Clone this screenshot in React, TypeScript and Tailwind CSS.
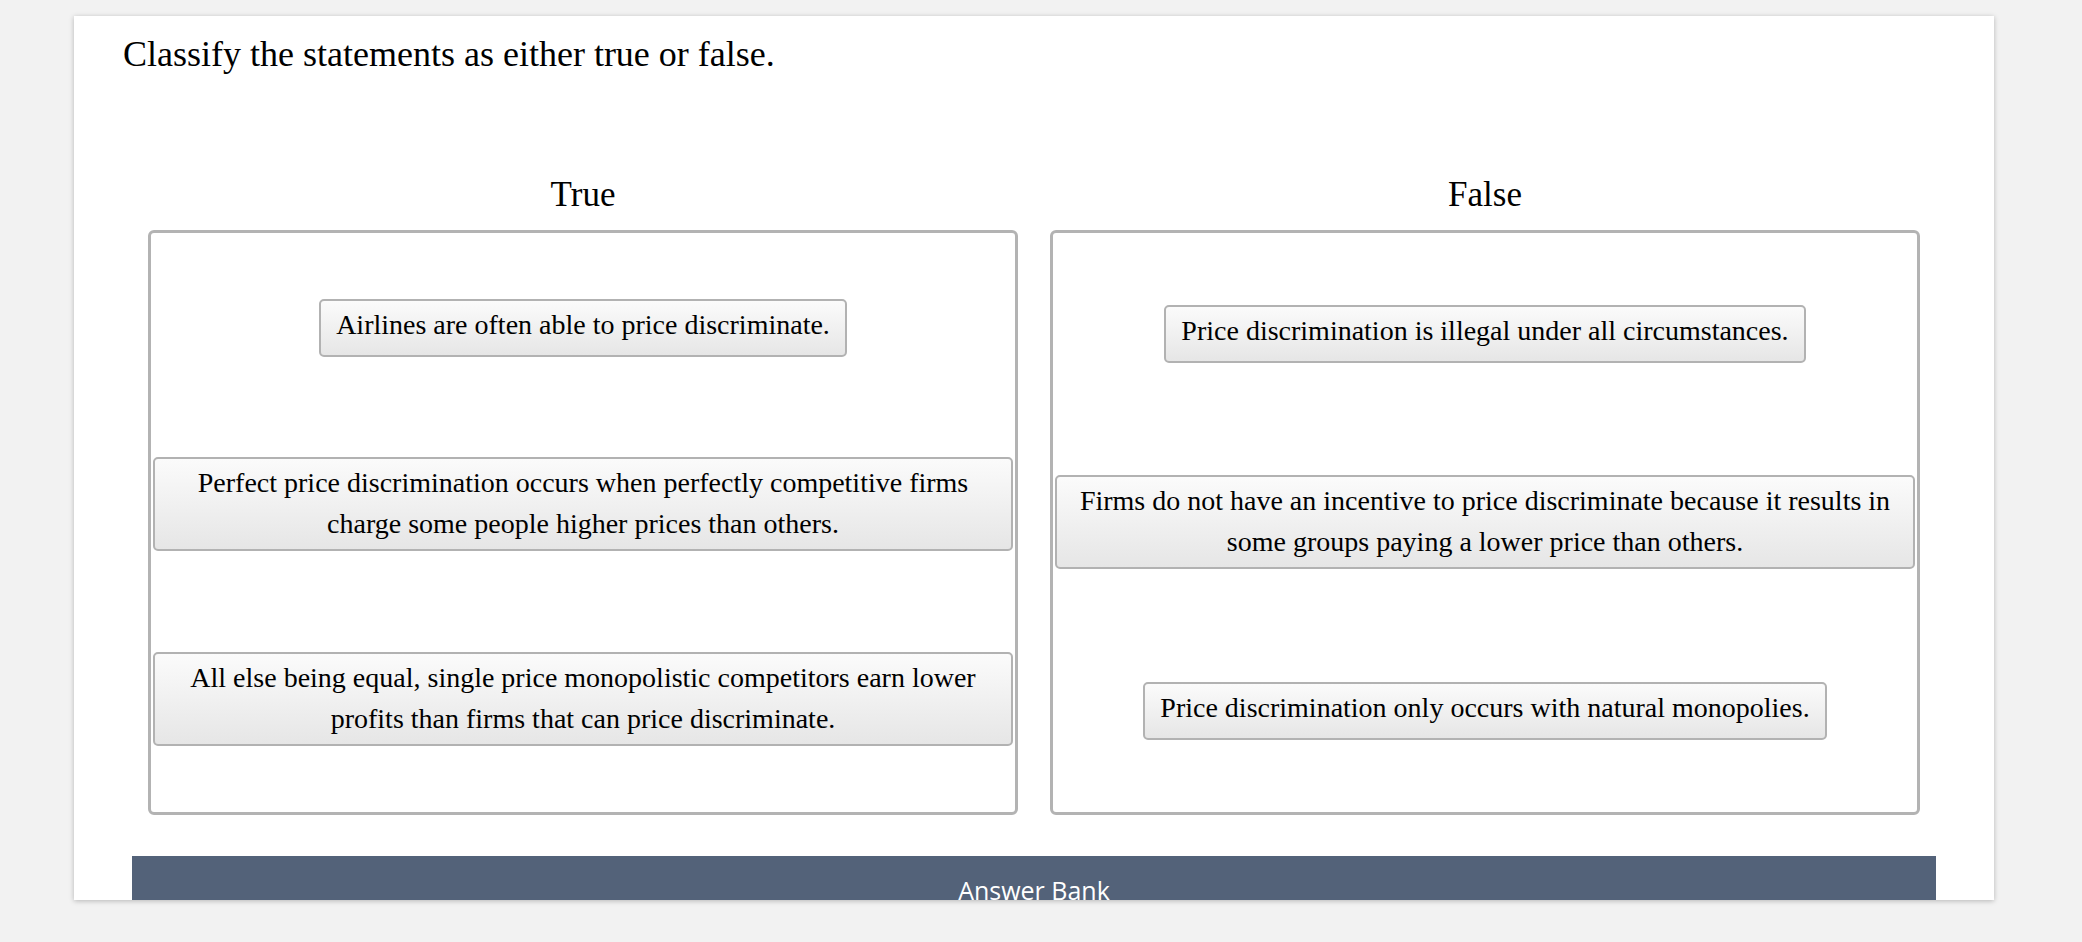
const trueItems = [
  'Airlines are often able to price discriminate.',
  'Perfect price discrimination occurs when perfectly competitive firms charge some people higher prices than others.',
  'All else being equal, single price monopolistic competitors earn lower profits than firms that can price discriminate.',
]

const falseItems = [
  'Price discrimination is illegal under all circumstances.',
  'Firms do not have an incentive to price discriminate because it results in some groups paying a lower price than others.',
  'Price discrimination only occurs with natural monopolies.',
]

function Chip({ text }: { text: string }) {
  return (
    <div className="max-w-full min-h-[58px] rounded-[5px] border-2 border-[#b2b2b2] bg-gradient-to-b from-[#fbfbfb] to-[#e6e6e6] px-[15px] pt-[3px] pb-[5px] text-center text-[28px] leading-[41px] text-black">
      {text}
    </div>
  )
}

function Column({ title, items }: { title: string; items: string[] }) {
  return (
    <div className="flex flex-col">
      <h2 className="text-center text-[35px] leading-[39px] text-black">{title}</h2>
      {/* drop zone */}
      <div className="mt-[16px] h-[585px] rounded-[6px] border-[3px] border-[#b3b3b3] bg-white px-[2px] py-4 flex flex-col items-center justify-around">
        {items.map((t) => (
          <Chip key={t} text={t} />
        ))}
      </div>
    </div>
  )
}

export default function App() {
  return (
    <div className="min-h-[942px] w-full bg-[#f2f2f2] pt-[16px] font-['Liberation_Serif',_'Times_New_Roman',_serif]">
      <div className="ml-[74px] w-[1920px] h-[884px] overflow-hidden bg-white shadow-[0_1px_5px_rgba(0,0,0,0.25)]">
        <p className="pl-[49px] pt-[18px] text-[36px] leading-[41px] text-black">
          Classify the statements as either true or false.
        </p>

        <div className="mt-[100px] px-[74px] grid grid-cols-2 gap-[32px]">
          <Column title="True" items={trueItems} />
          <Column title="False" items={falseItems} />
        </div>

        {/* Answer bank header, cut off by the card */}
        <div className="mx-[58px] mt-[41px] h-[120px] bg-[#536279] pt-[17px] text-center font-['Open_Sans',_sans-serif] text-[25px] leading-[34px] text-white">
          Answer Bank
        </div>
      </div>
    </div>
  )
}
